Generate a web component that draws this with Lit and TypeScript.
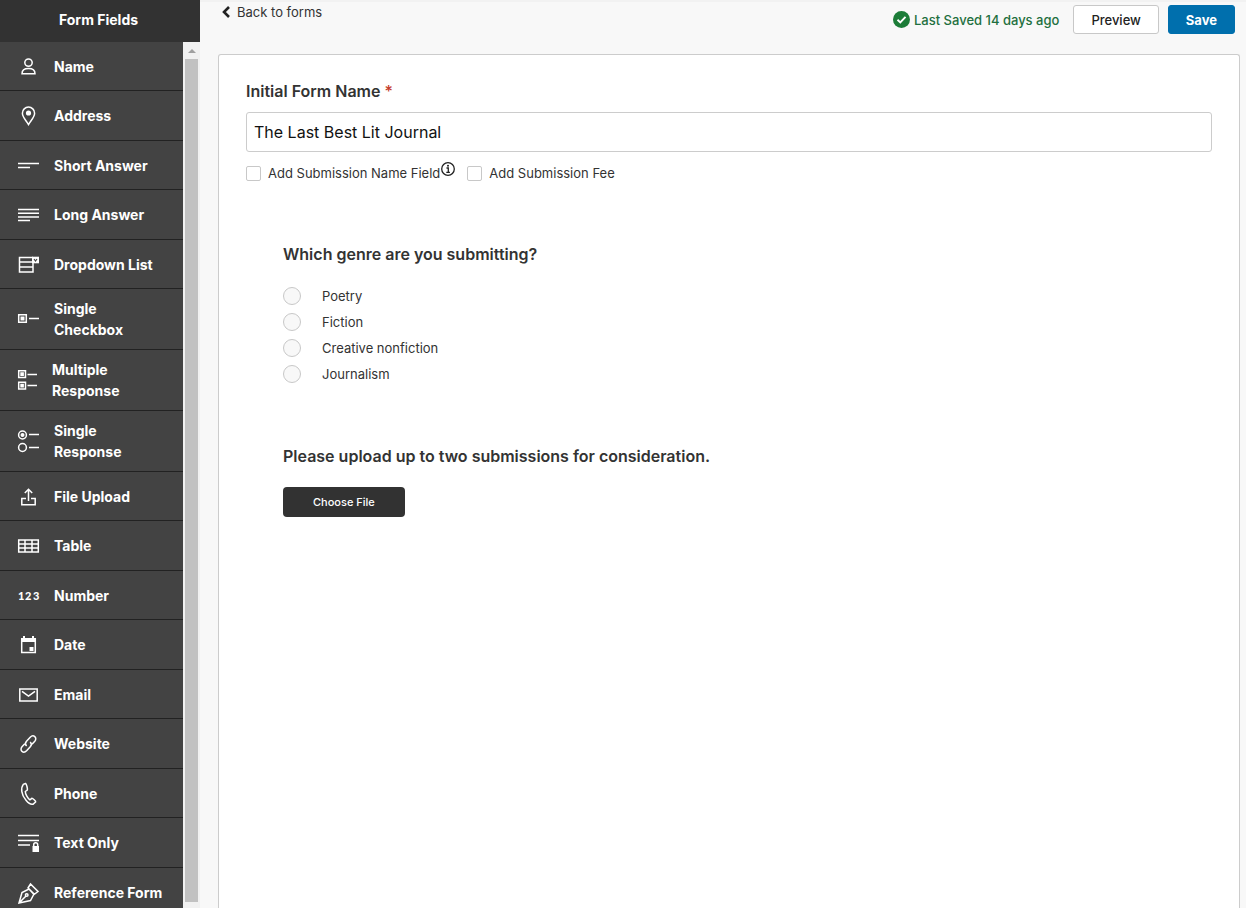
import { LitElement, html, svg, css, type SVGTemplateResult } from "lit";
import { customElement, state } from "lit/decorators.js";
import { classMap } from "lit/directives/class-map.js";

interface Field {
  label: string[];
  width: number;
  height: number;
  icon: SVGTemplateResult;
}

const fields: Field[] = [
  {
    label: ["Name"], width: 21, height: 18,
    icon: svg`<circle cx="10.5" cy="4.6" r="3.7"/><path d="M4 15.800c0-3.600 2.600-5.200 6.500-5.200s6.500 1.600 6.500 5.200z"/>`,
  },
  {
    label: ["Address"], width: 21, height: 20,
    icon: svg`<path d="M10.500 18.500C8 14.500 4.400 11 4.400 7.200a6.100 6.100 0 0 1 12.200 0c0 3.800-3.600 7.300-6.100 11.300z"/><circle class="solid" cx="10.500" cy="7" r="2.600"/>`,
  },
  {
    label: ["Short Answer"], width: 21, height: 8,
    icon: svg`<path d="M0 1.500h21M0 5.500h12"/>`,
  },
  {
    label: ["Long Answer"], width: 21, height: 14,
    icon: svg`<path d="M0 1.500h21M0 5.200h21M0 8.900h21M0 12.500h12"/>`,
  },
  {
    label: ["Dropdown List"], width: 21, height: 18,
    icon: svg`<path d="M15 1.500H1.500v14.500H15V6M1.500 6H15M1.500 11H15"/><path class="solid" d="M14 .700h7v6.600h-7z"/><path class="cut" d="M16 3l1.500 2L19 3"/>`,
  },
  {
    label: ["Single", "Checkbox"], width: 21, height: 10,
    icon: svg`<path d="M.7.700h7.600v7.600H.7zM11 4.500h10"/><path class="solid" d="M2.500 2.500h4v4h-4z"/>`,
  },
  {
    label: ["Multiple", "Response"], width: 19, height: 20,
    icon: svg`<path d="M.7.700h6.800v6.800H.7zM9.500 4.500H19M.7 12.200h6.800v6.800H.7zM9.500 15.500H19"/><path class="solid" d="M2.300 2.300h3.600v3.600H2.300zM2.300 13.800h3.600v3.600H2.300z"/>`,
  },
  {
    label: ["Single", "Response"], width: 21, height: 22,
    icon: svg`<circle cx="4.500" cy="5" r="3.900"/><circle class="solid" cx="4.500" cy="5" r="2"/><circle cx="4.500" cy="17.500" r="3.900"/><path d="M11 4.500h10M11 17.500h10"/>`,
  },
  {
    label: ["File Upload"], width: 21, height: 18,
    icon: svg`<path d="M8 10.500H3.800v6.200h13.400v-6.200H13M10.500 13V1.500M6.800 5l3.700-3.700L14.200 5"/>`,
  },
  {
    label: ["Table"], width: 21, height: 14,
    icon: svg`<path d="M.7 1h19.600v12H.7zM.7 5h19.600M.7 9h19.600M7 1v12M14 1v12"/>`,
  },
  {
    label: ["Number"], width: 21, height: 12,
    icon: svg`<text class="digits" x="0" y="10">1</text><text class="digits" x="7" y="10">2</text><text class="digits" x="15" y="10">3</text>`,
  },
  {
    label: ["Date"], width: 21, height: 18,
    icon: svg`<path d="M3.700 3h13.600v13.600H3.700z"/><path class="solid" d="M3 2h15v4H3zM5 0h2v3H5zM14 0h2v3h-2zM11.500 11h4v4h-4z"/>`,
  },
  {
    label: ["Email"], width: 21, height: 14,
    icon: svg`<path d="M1.800 1h17.400v12H1.800zM4 3.300l6.500 4.800L17 3.300"/>`,
  },
  {
    label: ["Website"], width: 21, height: 20,
    icon: svg`<path d="M8.600 12c-1.500-1.500-1.400-3.400-.1-4.800l3.700-4c1.500-1.500 3.300-1.700 4.600-.6s1.300 3.100 0 4.600l-2.800 3"/><path d="M12.200 8c1.500 1.500 1.400 3.400.1 4.800l-3.700 4c-1.500 1.500-3.300 1.700-4.600.6s-1.300-3.100 0-4.600l2.800-3"/>`,
  },
  {
    label: ["Phone"], width: 21, height: 24,
    icon: svg`<path d="M7.600 1.500l-2.300.9C2.600 6 3.200 13 8 18.300c2.400 2.900 5.200 4.400 7 3.900l2.700-2.400c.2-.7-3-3.500-3.800-3.500l-2 1.500C9.800 16.500 7.300 12 7.300 9.500l2-1.500c.400-1.200-.7-6-1.700-6.500z"/>`,
  },
  {
    label: ["Text Only"], width: 21, height: 20,
    icon: svg`<path d="M0 2.500h21M0 7.500h21M0 12h12"/><path class="solid" d="M14.500 13H21v6h-6.500z"/><path d="M15.700 13.500v-1.800a2 2 0 0 1 4 0v1.800"/>`,
  },
  {
    label: ["Reference Form"], width: 21, height: 22,
    icon: svg`<path d="M1 21l3-10.500 7-3.500 5 5-3.500 6.500zM1.500 20.500L8 14M10 6l2.500-4 7.500 7.500-4 3z"/><circle cx="8.700" cy="13" r="1.300"/>`,
  },
];

const genres = ["Poetry", "Fiction", "Creative nonfiction", "Journalism"];

@customElement("field-palette")
class FieldPalette extends LitElement {
  static styles = css`
    :host {
      display: flex;
      flex-direction: column;
      min-height: 0;
      background: #434343;
      color: #fff;
    }
    .title {
      margin: 0;
      padding: 9px 3px 11px 0;
      background: #323232;
      font-size: 14px;
      font-weight: 700;
      line-height: 22px;
      text-align: center;
    }
    .body {
      display: flex;
      flex: 1;
      min-height: 0;
    }
    .list {
      flex: 1;
      margin: 0;
      padding: 0;
      list-style: none;
      overflow-y: auto;
      scrollbar-width: none;
    }
    .row {
      border-bottom: 1px solid #222;
    }
    .item {
      display: flex;
      align-items: center;
      gap: 15px;
      width: 100%;
      border: 0;
      padding: 14px 0 13px 18px;
      background: none;
      color: inherit;
      font: 700 14px/21px Inter, sans-serif;
      text-align: left;
      cursor: grab;
    }
    .row:nth-child(even) .item {
      padding-bottom: 14px;
    }
    .row .item.double {
      padding-top: 9px;
      padding-bottom: 9px;
    }
    .line {
      display: block;
    }
    .icon {
      flex: none;
      margin: -2px 0;
      fill: none;
      stroke: #fff;
      stroke-width: 1.5;
      overflow: visible;
    }
    .solid {
      fill: #fff;
      stroke: none;
    }
    .cut {
      stroke: #434343;
      stroke-width: 1.2;
    }
    .digits {
      fill: #fff;
      stroke: none;
      font: 900 11px Lato, sans-serif;
    }
    .track {
      display: flex;
      flex-direction: column;
      align-items: center;
      gap: 6px;
      width: 17px;
      box-sizing: border-box;
      padding: 7px 0 6px;
      background: #f1f1f1;
    }
    .arrow {
      border: 4px solid transparent;
      border-top: 0;
      border-bottom-color: #a0a0a0;
    }
    .thumb {
      flex: 1;
      width: 13px;
      background: #c1c1c1;
    }
  `;

  render() {
    return html`
      <h2 class="title">Form Fields</h2>
      <div class="body">
        <ul class="list">
          ${fields.map(
            (f) => html`<li class="row">
              <button type="button" class=${classMap({ item: true, double: f.label.length > 1 })}>
                <svg class="icon" width=${f.width} height=${f.height} aria-hidden="true">${f.icon}</svg>
                <span>${f.label.map((l) => html`<span class="line">${l}</span>`)}</span>
              </button>
            </li>`
          )}
        </ul>
        <div class="track" aria-hidden="true">
          <span class="arrow"></span>
          <span class="thumb"></span>
        </div>
      </div>
    `;
  }
}

@customElement("app-root")
class AppRoot extends LitElement {
  @state() private formName = "The Last Best Lit Journal";

  static styles = css`
    :host {
      display: grid;
      grid-template-columns: 200px 1fr;
      height: 100vh;
      overflow: hidden;
      background: #f8f8f8;
      color: #333;
      font-family: Inter, sans-serif;
      font-size: 13px;
      line-height: 20px;
    }
    .main {
      display: flex;
      flex-direction: column;
      gap: 20px;
      min-width: 0;
      border-top: 2px solid #f2f2f2;
      padding: 0 6px 0 18px;
    }
    .bar {
      display: flex;
      align-items: flex-start;
      justify-content: space-between;
      padding: 0 5px 0 4px;
    }
    .back {
      display: flex;
      align-items: center;
      gap: 7px;
      color: #333;
      text-decoration: none;
    }
    .chevron {
      fill: none;
      stroke: #222;
      stroke-width: 2.6;
    }
    .actions {
      display: flex;
      align-items: center;
      padding-top: 3px;
    }
    .saved {
      display: flex;
      align-items: center;
      gap: 4px;
      margin-right: 14px;
      color: #1f7040;
      font-weight: 500;
    }
    .button {
      box-sizing: border-box;
      height: 29px;
      border: 1px solid #c8c8c8;
      border-radius: 3px;
      padding: 0 17px;
      background: #fff;
      color: #222;
      font: 500 13px/20px Inter, sans-serif;
    }
    .primary {
      margin-left: 9px;
      border-color: #006fad;
      background: #006fad;
      color: #fff;
      font-weight: 700;
    }
    .card {
      flex: 1;
      border: 1px solid #ccc;
      border-bottom: 0;
      border-radius: 3px 3px 0 0;
      padding: 25px 27px 0;
      background: #fff;
    }
    .heading {
      display: block;
      margin: 0;
      font-size: 16px;
      font-weight: 600;
      line-height: 22px;
    }
    .required {
      color: #c43b2a;
      font-weight: 500;
    }
    .name {
      display: block;
      box-sizing: border-box;
      width: 100%;
      height: 40px;
      margin-top: 10px;
      border: 1px solid #ccc;
      border-radius: 3px;
      padding: 0 7px;
      background: #fff;
      color: #111;
      font: 400 16px/20px Inter, sans-serif;
    }
    .options {
      display: flex;
      align-items: center;
      margin-top: 10px;
    }
    .check {
      display: flex;
      align-items: center;
      gap: 7px;
    }
    .box {
      appearance: none;
      box-sizing: border-box;
      width: 15px;
      height: 15px;
      margin: 0;
      border: 1px solid #c8c8c8;
      border-radius: 2px;
      background: #fff;
    }
    .box:checked,
    .radio:checked {
      background: #006fad;
    }
    .info {
      display: flex;
      margin: 0 12px 8px 1px;
      border: 0;
      padding: 0;
      background: none;
    }
    .question {
      margin: 59px 0 0 37px;
      border: 0;
      padding: 0;
    }
    .heading.legend {
      padding: 0;
    }
    .choices {
      display: grid;
      gap: 6px;
      margin-top: 21px;
      padding-bottom: 2px;
    }
    .choice {
      display: flex;
      align-items: center;
      gap: 21px;
    }
    .radio {
      appearance: none;
      box-sizing: border-box;
      width: 18px;
      height: 18px;
      margin: 0;
      border: 1px solid #c8c8c8;
      border-radius: 50%;
      background: #f8f8f8;
    }
    .choose {
      display: block;
      height: 30px;
      margin-top: 20px;
      border: 0;
      border-radius: 4px;
      padding: 0 30px;
      background: #323232;
      color: #fff;
      font: 500 11px/20px Inter, sans-serif;
    }
  `;

  render() {
    return html`
      <field-palette></field-palette>
      <main class="main">
        <header class="bar">
          <a class="back" href="#forms">
            <svg class="chevron" width="8" height="12" aria-hidden="true"><path d="M7 1L2 6l5 5" /></svg>
            Back to forms
          </a>
          <div class="actions">
            <span class="saved">
              <svg width="17" height="17" aria-hidden="true">
                <circle cx="8.500" cy="8.500" r="8.500" fill="#1c7c38" />
                <path d="M4.500 8.800l2.800 2.700 5.200-5.700" fill="none" stroke="#fff" stroke-width="1.900" />
              </svg>
              Last Saved 14 days ago
            </span>
            <button type="button" class="button">Preview</button>
            <button type="button" class="button primary">Save</button>
          </div>
        </header>
        <section class="card">
          <label class="heading" for="form-name">Initial Form Name <span class="required">*</span></label>
          <input
            id="form-name"
            class="name"
            type="text"
            required
            .value=${this.formName}
            @input=${(e: Event) => (this.formName = (e.target as HTMLInputElement).value)}
          />
          <div class="options">
            <label class="check"><input class="box" type="checkbox" />Add Submission Name Field</label>
            <button type="button" class="info" aria-label="About the name field">
              <svg width="14" height="14" fill="none" stroke="#222" aria-hidden="true">
                <circle cx="7" cy="7" r="6.300" stroke-width="1.300" />
                <path d="M5.500 6h1.800v4.300M5.300 10.300h3.600" stroke-width="1.300" />
                <circle cx="7" cy="3.700" r="1" fill="#222" stroke="none" />
              </svg>
            </button>
            <label class="check"><input class="box" type="checkbox" />Add Submission Fee</label>
          </div>
          <fieldset class="question">
            <legend class="heading legend">Which genre are you submitting?</legend>
            <div class="choices">
              ${genres.map(
                (g) => html`<label class="choice"><input class="radio" type="radio" name="genre" value=${g} />${g}</label>`
              )}
            </div>
          </fieldset>
          <div class="question">
            <h3 class="heading" id="upload-title">Please upload up to two submissions for consideration.</h3>
            <button type="button" class="choose" aria-describedby="upload-title">Choose File</button>
          </div>
        </section>
      </main>
    `;
  }
}
